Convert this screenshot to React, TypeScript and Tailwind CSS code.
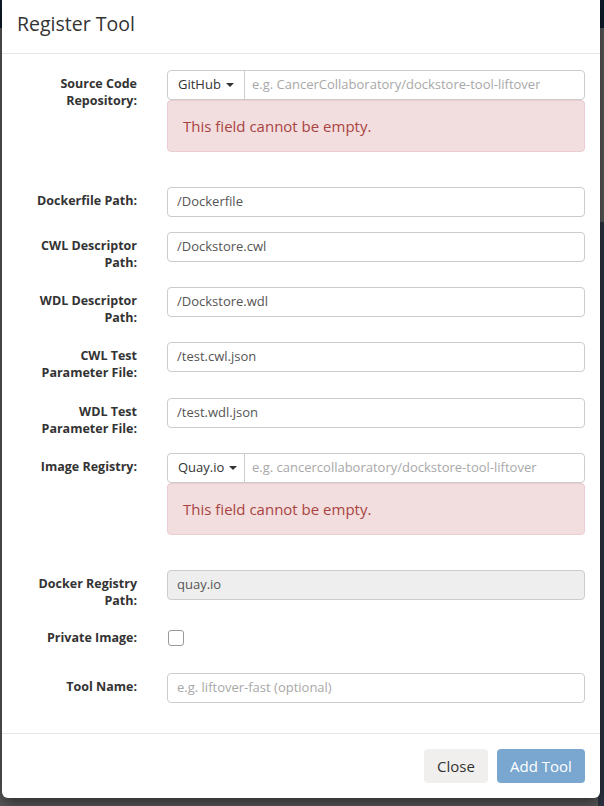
import React from 'react';

const font = { fontFamily: '"Open Sans", "Liberation Sans", sans-serif' };

const Label: React.FC<{ lines: string[] }> = ({ lines }) => (
  <div className="w-[120px] shrink-0 pt-[5px] pb-[1px] text-right text-[12.5px] leading-[17px] font-bold text-[#333]">
    {lines.map((l, i) => (
      <div key={i}>{l}</div>
    ))}
  </div>
);

const TextInput: React.FC<{ value?: string; placeholder?: string; disabled?: boolean }> = ({ value, placeholder, disabled }) => (
  <div
    className={`h-[30px] flex items-center pl-[9px] border border-[#ccc] rounded-[4px] text-[13px] ${
      disabled ? 'bg-[#eee]' : 'bg-white'
    } ${value ? 'text-[#555]' : 'text-[#a8a8a8]'}`}
  >
    {value || placeholder}
  </div>
);

const Caret = () => (
  <span className="inline-block ml-[5px] w-0 h-0 border-t-[4px] border-t-[#333] border-x-[4px] border-x-transparent" />
);

const GroupWithError: React.FC<{ button: string; placeholder: string }> = ({ button, placeholder }) => (
  <div className="mb-[20px]">
    <div className="flex h-[30px] border border-[#ccc] rounded-[4px] text-[13px]">
      <div className="w-[77px] flex items-center pl-[10px] text-[#333] border-r border-[#ccc]">
        {button}
        <Caret />
      </div>
      <div className="flex items-center pl-[7px] text-[#a8a8a8] whitespace-nowrap overflow-hidden">{placeholder}</div>
    </div>
    <div className="h-[52px] flex items-center pl-[15px] bg-[#f2dede] border border-[#ebccd1] rounded-[4px] text-[15px] text-[#a94442]">
      This field cannot be empty.
    </div>
  </div>
);

const Row: React.FC<{ lines: string[]; children: React.ReactNode; className?: string }> = ({ lines, children, className }) => (
  <div className={`flex gap-[30px] mb-[15px] ${className || ''}`}>
    <Label lines={lines} />
    <div className="flex-1 min-w-0">{children}</div>
  </div>
);

export default function App() {
  return (
    <div className="relative w-[604px] h-[806px] bg-[#595959] overflow-hidden" style={font}>
      {/* backdrop hints of the page behind */}
      <div className="absolute left-0 right-0 top-0 h-[28px] bg-[#0f1b2b]" />
      <div className="absolute right-0 top-[222px] bottom-0 w-[6px] bg-[#2d3441]" />

      <div className="relative ml-[2px] w-[598px] bg-white rounded-b-[6px] shadow-[0_5px_15px_rgba(0,0,0,0.5)]">
        {/* Header */}
        <div className="h-[54px] pl-[15px] pt-[11px] border-b border-[#e5e5e5]">
          <h4 className="text-[19.5px] leading-[26px] text-[#333]">Register Tool</h4>
        </div>

        {/* Body */}
        <div className="px-[15px] pt-[16px] pb-[15px]">
          <Row lines={['Source Code', 'Repository:']}>
            <GroupWithError button="GitHub" placeholder="e.g. CancerCollaboratory/dockstore-tool-liftover" />
          </Row>
          <Row lines={['Dockerfile Path:']}>
            <TextInput value="/Dockerfile" />
          </Row>
          <Row lines={['CWL Descriptor', 'Path:']}>
            <TextInput value="/Dockstore.cwl" />
          </Row>
          <Row lines={['WDL Descriptor', 'Path:']}>
            <TextInput value="/Dockstore.wdl" />
          </Row>
          <Row lines={['CWL Test', 'Parameter File:']} className="!mb-[16px]">
            <TextInput value="/test.cwl.json" />
          </Row>
          <Row lines={['WDL Test', 'Parameter File:']}>
            <TextInput value="/test.wdl.json" />
          </Row>
          <Row lines={['Image Registry:']}>
            <GroupWithError button="Quay.io" placeholder="e.g. cancercollaboratory/dockstore-tool-liftover" />
          </Row>
          <Row lines={['Docker Registry', 'Path:']}>
            <TextInput value="quay.io" disabled />
          </Row>
          <div className="flex gap-[30px] h-[33px] mb-[15px]">
            <div className="w-[120px] shrink-0 pt-[4px] text-right text-[12.5px] leading-[17px] font-bold text-[#333]">
              Private Image:
            </div>
            <div className="pt-[5px] pl-[1px]">
              <div className="w-[16px] h-[16px] border border-[#999] rounded-[3px] bg-white" />
            </div>
          </div>
          <Row lines={['Tool Name:']} className="!mb-0">
            <TextInput placeholder="e.g. liftover-fast (optional)" />
          </Row>
        </div>

        {/* Footer */}
        <div className="mt-[15px] border-t border-[#e5e5e5] px-[15px] pt-[15px] pb-[15px] flex justify-end gap-[9px]">
          <button className="w-[64px] h-[34px] rounded-[4px] bg-[#f0efee] text-[15px] text-[#333]">Close</button>
          <button className="w-[88px] h-[34px] rounded-[4px] bg-[#7aa7d0] text-[15px] text-white">Add Tool</button>
        </div>
      </div>
    </div>
  );
}
